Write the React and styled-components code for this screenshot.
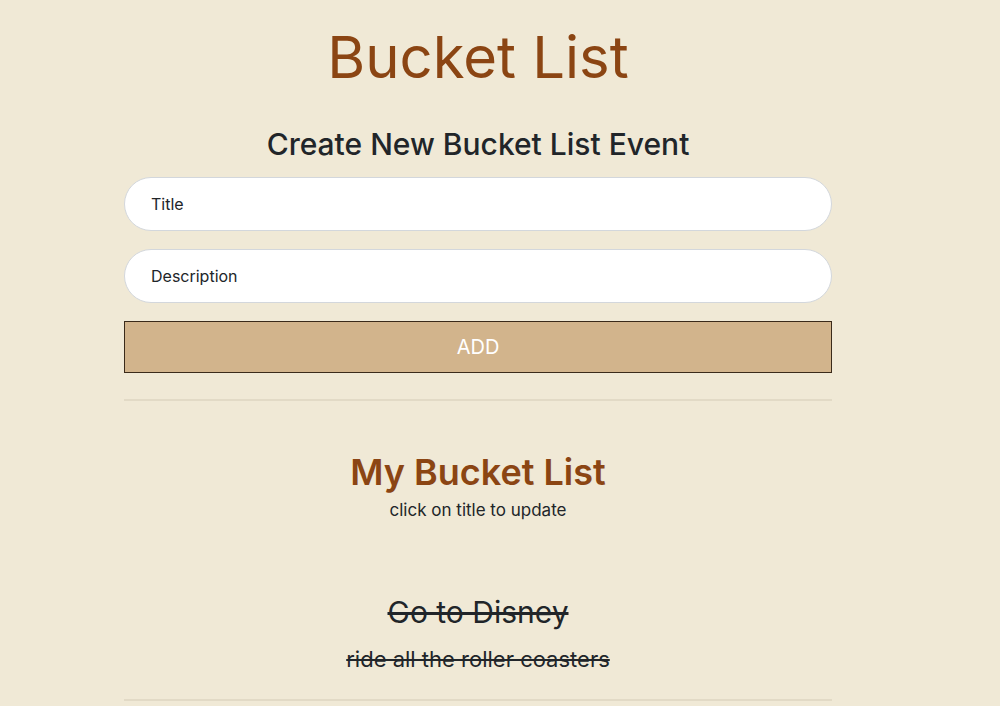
import React from "react";
import styled, { createGlobalStyle } from "styled-components";

const GlobalStyle = createGlobalStyle`
* {
  margin: 0;
  padding: 0;
  box-sizing: border-box;
}

body {
  background-color: #f0e9d6;
  font-family: "Inter", "Liberation Sans", sans-serif;
  color: #212529;
}
`;

const Page = styled.div`
  width: 708px;
  margin-left: 124px;
  display: flex;
  flex-direction: column;
  align-items: center;
`;

const Title = styled.h1`
  font-size: 58px;
  font-weight: 400;
  color: #8b4513;
  margin-top: 23px;
  line-height: 1.2;
`;

const FormHeading = styled.h2`
  font-size: 30px;
  font-weight: 500;
  margin-top: 33px;
  line-height: 1.2;
`;

const Form = styled.form`
  width: 100%;
  display: flex;
  flex-direction: column;
  gap: 18px;
  margin-top: 15px;
`;

const Input = styled.input`
  width: 100%;
  height: 54px;
  padding: 0 26px;
  border: 1.5px solid #d3d7dc;
  border-radius: 30px;
  background: #ffffff;
  font-family: "Inter", sans-serif;
  font-size: 16px;
  color: #212529;
  outline: none;
  &::placeholder {
    color: #212529;
  }
`;

const Button = styled.button`
  width: 100%;
  height: 52px;
  background-color: #d2b48c;
  border: 1px solid #3a2a1a;
  color: #ffffff;
  font-family: "Inter", sans-serif;
  font-size: 20px;
  cursor: pointer;
`;

const Divider = styled.hr`
  width: 100%;
  border: none;
  border-top: 2px solid #e2dac6;
  margin-top: ${(p) => p.$top}px;
`;

const ListHeading = styled.h2`
  font-size: 36px;
  font-weight: 600;
  color: #8b4513;
  margin-top: 50px;
  line-height: 1.2;
`;

const Hint = styled.p`
  font-size: 17px;
  line-height: 1.2;
  margin-top: 6px;
`;

const Item = styled.div`
  display: flex;
  flex-direction: column;
  align-items: center;
  margin-top: 74px;
  text-decoration: ${(p) => (p.$done ? "line-through" : "none")};
`;

const ItemTitle = styled.h3`
  font-size: 30px;
  font-weight: 400;
  line-height: 1.2;
  cursor: pointer;
`;

const ItemDesc = styled.p`
  font-size: 22px;
  margin-top: 16px;
  line-height: 1.2;
`;

const items = [
  { title: "Go to Disney", description: "ride all the roller coasters", done: true },
];

const App = () => {
  return (
    <>
      <GlobalStyle />
      <Page>
        <Title>Bucket List</Title>
        <FormHeading>Create New Bucket List Event</FormHeading>
        <Form onSubmit={(e) => e.preventDefault()}>
          <Input type="text" placeholder="Title" />
          <Input type="text" placeholder="Description" />
          <Button type="submit">ADD</Button>
        </Form>
        <Divider $top={26} />
        <ListHeading>My Bucket List</ListHeading>
        <Hint>click on title to update</Hint>
        {items.map((item) => (
          <Item key={item.title} $done={item.done}>
            <ItemTitle>{item.title}</ItemTitle>
            <ItemDesc>{item.description}</ItemDesc>
          </Item>
        ))}
        <Divider $top={26} />
      </Page>
    </>
  );
};

export default App;
